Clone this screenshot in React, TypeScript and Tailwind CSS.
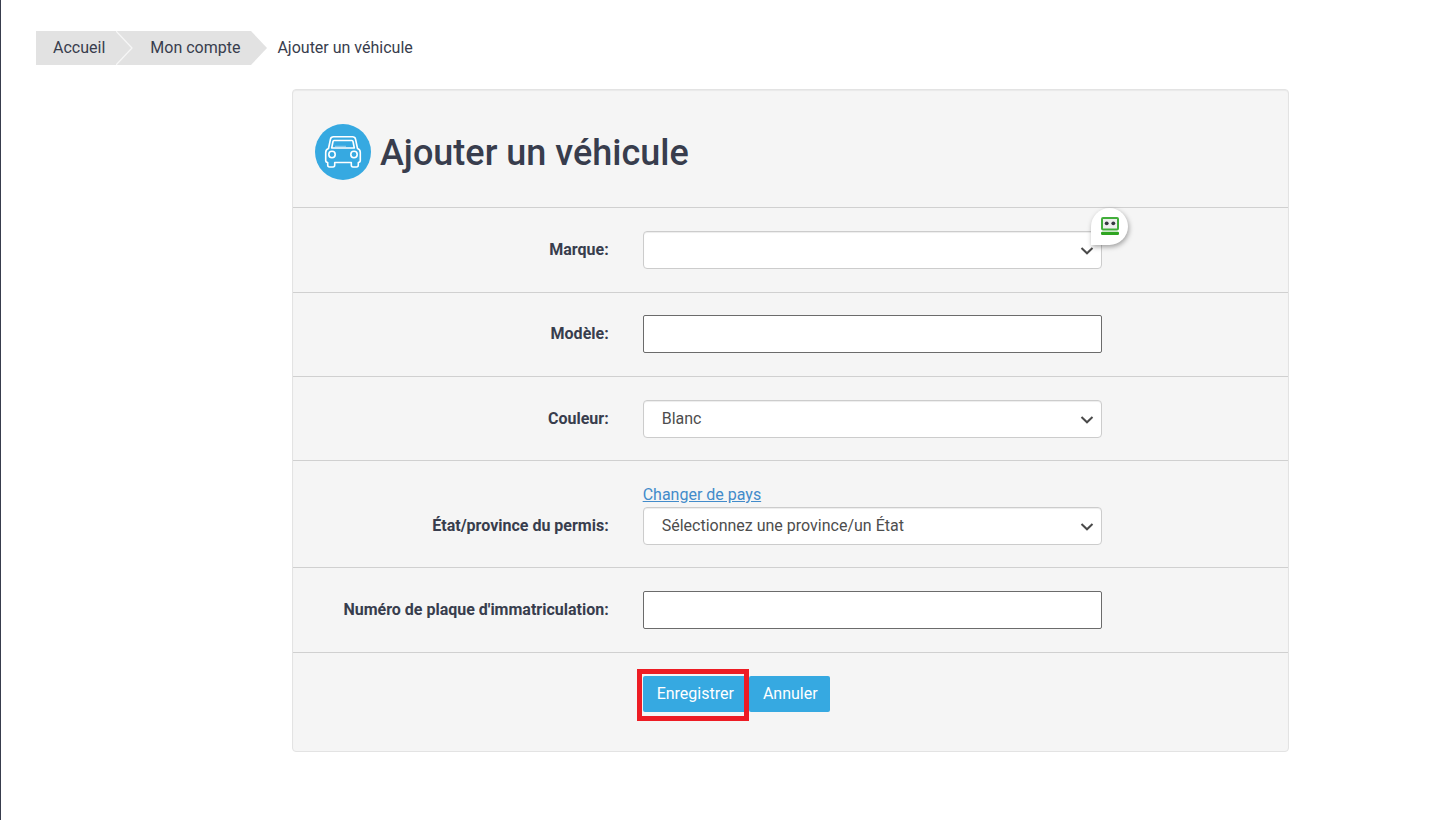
import { useState } from 'react'
import type { ReactNode } from 'react'
import { clsx } from 'clsx'

const MAKES = ['', 'Audi', 'BMW', 'Chevrolet', 'Ford', 'Honda', 'Hyundai', 'Mazda', 'Toyota']
const COLORS = ['Blanc', 'Argent', 'Bleu', 'Gris', 'Noir', 'Rouge', 'Vert']
const REGIONS = ['Sélectionnez une province/un État', 'Alberta', 'Colombie-Britannique', 'Ontario', 'Québec']

const inputClass = 'block h-[38px] w-full rounded-xs border border-[#6b6b6b] bg-white px-[18px] text-base text-[#4d4d4d]'
const buttonClass = 'h-9 rounded-xs bg-[#36a9e1] pl-[14px] text-white'

function CarIcon() {
  return (
    <svg viewBox="0 0 56 56" className="size-14 shrink-0" aria-hidden="true">
      <circle cx="28" cy="28" r="28" fill="#36a9e1" />
      <g fill="none" stroke="#fff" strokeWidth="1.6" strokeLinejoin="round" strokeLinecap="round">
        <path d="M13.5 24.500 L15.500 15 Q16 12.800 18.500 12.800 H37.500 Q40 12.800 40.500 15 L42.500 24.500 Q45.300 25.500 45.300 28.500 V36.500 Q45.300 38.300 43.300 38.500 V41 Q43.300 43 41.500 43 H38 Q36.300 43 36.300 41 V38.500 H19.700 V41 Q19.700 43 18 43 H14.500 Q12.700 43 12.700 41 V38.500 Q10.700 38.300 10.700 36.500 V28.500 Q10.700 25.500 13.500 24.500 Z" />
        <path d="M19 16.500 H37 Q37.800 16.500 38 17.500 L39.300 24 H16.700 L18 17.500 Q18.200 16.500 19 16.500 Z" />
        <circle cx="17" cy="30.500" r="3.200" />
        <circle cx="39" cy="30.500" r="3.200" />
      </g>
      <path d="M20 22.300 H31" stroke="#8fcfef" strokeWidth="1" />
    </svg>
  )
}

function RobotIcon() {
  return (
    <svg viewBox="0 0 18 18" className="mb-[2px] size-[18px]" aria-hidden="true">
      <rect x="1" y="1" width="16" height="11.500" rx="1" fill="#eeeeee" stroke="#42ae3b" strokeWidth="2" />
      <circle cx="5.700" cy="6.300" r="1.900" fill="#35383f" />
      <circle cx="12.300" cy="6.300" r="1.900" fill="#35383f" />
      <rect x="0" y="14.700" width="18" height="3.200" rx="1.200" fill="#2fa522" />
    </svg>
  )
}

function Crumb({ label, first, last }: { label: string; first?: boolean; last?: boolean }) {
  return (
    <li className={clsx('relative h-[34px] bg-[#e2e2e2] pr-[11px] leading-[34px]', first ? 'pl-[17px]' : 'pl-[34px]')}>
      <a href="#">{label}</a>
      <svg viewBox="0 0 17 34" className="absolute left-full top-0 z-10 h-[34px] w-[17px]" aria-hidden="true">
        <path d="M0 0 L16 17 L0 34 Z" fill="#e2e2e2" />
        {!last && <path d="M0 0 L16 17 L0 34" fill="none" stroke="#f6f6f6" strokeWidth="1.300" />}
      </svg>
    </li>
  )
}

interface FieldProps {
  id: string
  label: string
  spacing?: string
  children: ReactNode
}

function Field({ id, label, spacing = 'pt-[23px] pb-[23px]', children }: FieldProps) {
  return (
    <div className={clsx('flex items-end border-b border-[#d0d0d0]', spacing)}>
      <label htmlFor={id} className="w-1/3 pr-4 text-right font-bold leading-[38px]">{label}</label>
      <div className="w-1/2 pl-[18px] pr-5">{children}</div>
    </div>
  )
}

interface SelectProps {
  id: string
  options: string[]
  badge?: ReactNode
}

function Select({ id, options, badge }: SelectProps) {
  const [value, setValue] = useState(options[0])
  return (
    <div className="relative">
      <select
        id={id}
        value={value}
        onChange={e => setValue(e.target.value)}
        className="block h-[38px] w-full appearance-none rounded border border-[#cccccc] bg-white pl-[18px] pr-8 text-base text-[#4d4d4d] shadow-[inset_0_1px_1px_rgba(0,0,0,0.075)]"
      >
        {options.map(o => <option key={o} value={o}>{o}</option>)}
      </select>
      <svg viewBox="0 0 14 10" className="pointer-events-none absolute right-2 top-[15px] h-[10px] w-[14px]" aria-hidden="true">
        <path d="M1.500 2 L7 7.300 L12.500 2" fill="none" stroke="#4a4a4a" strokeWidth="2" />
      </svg>
      {badge}
    </div>
  )
}

export default function App() {
  return (
    <div className="min-h-screen border-l border-[#383d4d] bg-white pb-10 pt-[31px] font-['Roboto','Liberation_Sans',sans-serif] text-base text-[#383d4d]">
      <nav aria-label="Fil d'Ariane" className="pl-[35px]">
        <ol className="flex">
          <Crumb label="Accueil" first />
          <Crumb label="Mon compte" last />
          <li className="pl-[26px] leading-[34px]" aria-current="page">Ajouter un véhicule</li>
        </ol>
      </nav>

      <main className="ml-[291px] mr-[161px] mt-6 rounded border border-[#e3e3e3] bg-[#f5f5f5] shadow-[inset_0_1px_1px_rgba(0,0,0,0.05)]">
        <header className="flex items-center gap-[9px] border-b border-[#d0d0d0] pb-[27px] pl-[22px] pt-[34px]">
          <CarIcon />
          <h1 className="pt-[2px] text-4xl font-medium">Ajouter un véhicule</h1>
        </header>

        <form onSubmit={e => e.preventDefault()}>
          <Field id="make" label="Marque:">
            <Select
              id="make"
              options={MAKES}
              badge={
                <button
                  type="button"
                  aria-label="Remplir le formulaire"
                  className="absolute -right-[26px] -top-[23px] flex size-[37px] items-center justify-center rounded-full rounded-bl-none bg-white shadow-[1px_2px_5px_rgba(0,0,0,0.35)]"
                >
                  <RobotIcon />
                </button>
              }
            />
          </Field>
          <Field id="model" label="Modèle:" spacing="pt-[22px] pb-[23px]">
            <input id="model" type="text" className={inputClass} />
          </Field>
          <Field id="color" label="Couleur:" spacing="pt-[23px] pb-[22px]">
            <Select id="color" options={COLORS} />
          </Field>
          <Field id="region" label="État/province du permis:" spacing="pt-[23px] pb-[22px]">
            <a href="#" className="mb-[2px] block w-fit leading-[21px] text-[#428bca] underline">Changer de pays</a>
            <Select id="region" options={REGIONS} />
          </Field>
          <Field id="plate" label="Numéro de plaque d'immatriculation:">
            <input id="plate" type="text" className={inputClass} />
          </Field>

          <div className="flex pb-[39px] pt-[23px]">
            <div className="w-1/3 shrink-0" />
            <div className="flex gap-[3px] pl-[18px]">
              <div className="relative">
                <button type="submit" className={clsx(buttonClass, 'pr-3')}>Enregistrer</button>
                <span className="pointer-events-none absolute -bottom-[9px] -left-[6px] -right-[3px] -top-[7px] z-10 border-5 border-[#ed1c24]" />
              </div>
              <button type="button" className={clsx(buttonClass, 'pr-3')}>Annuler</button>
            </div>
          </div>
        </form>
      </main>
    </div>
  )
}
